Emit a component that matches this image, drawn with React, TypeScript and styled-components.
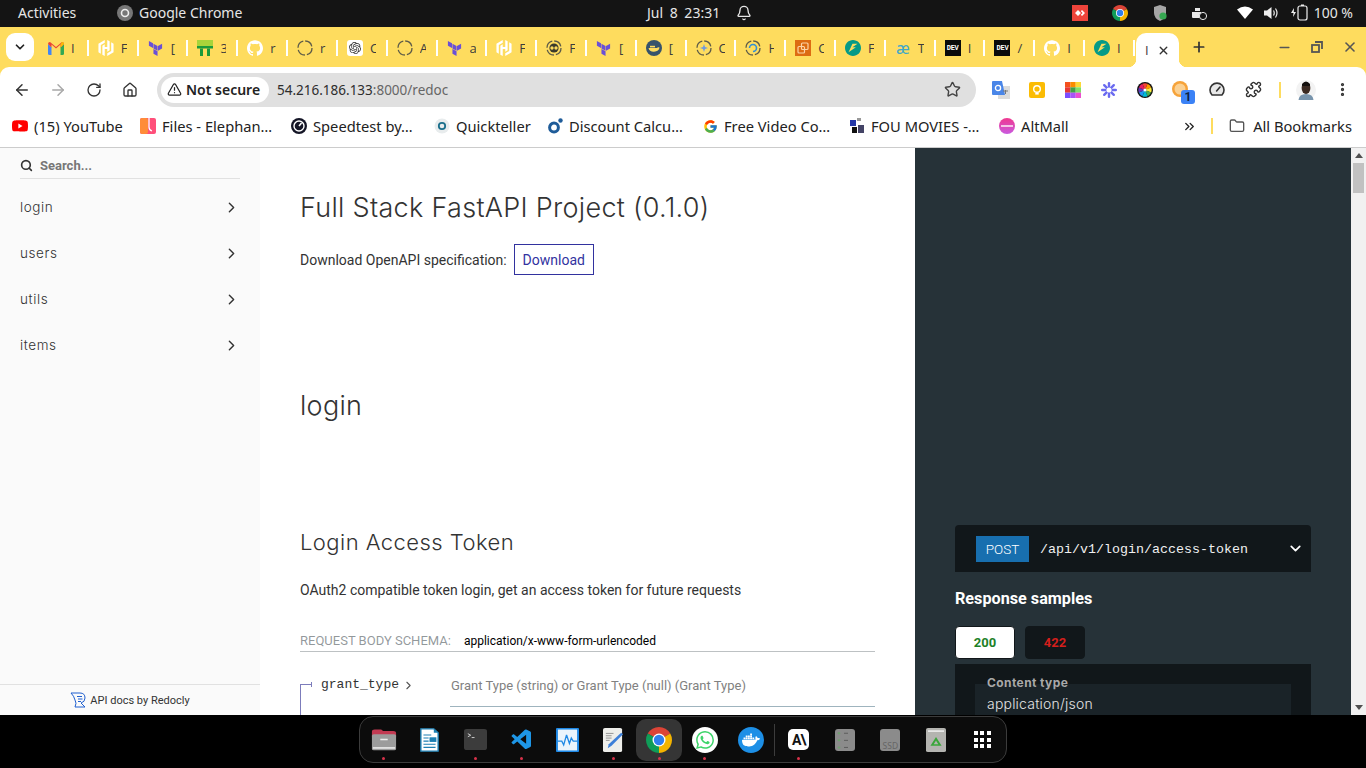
import React from "react"
import styled, { createGlobalStyle } from "styled-components"
import {
  ArrowLeft, ArrowRight, RotateCw, Home, Star, Puzzle, EllipsisVertical, TriangleAlert,
  ChevronDown, ChevronRight, ChevronsRight, Folder, Plus, X, Minus, Search, Bell,
} from "lucide-react"
import { SiHashicorp, SiTerraform, SiGithub, SiOpenai, SiDocker, SiFastapi, SiWhatsapp, SiYoutube } from "react-icons/si"
import { VscVscode } from "react-icons/vsc"
import { FcGoogle } from "react-icons/fc"

const GlobalStyle = createGlobalStyle`
  html, body { margin: 0; padding: 0; background: #000; }
  * { box-sizing: border-box; }
`

const CHROME_FONT = `"Noto Sans", "Open Sans", sans-serif`
const HEADING_FONT = `Inter, "Noto Sans", sans-serif`
const BODY_FONT = `Roboto, sans-serif`
const MONO_FONT = `"Liberation Mono", monospace`

const Screen = styled.div`
  width: 1366px;
  height: 768px;
  display: flex;
  flex-direction: column;
  overflow: hidden;
  background: #fedc5e;
`

/* gnome top bar */
const TopBar = styled.div`
  height: 27px;
  flex: none;
  display: flex;
  align-items: center;
  padding: 0 13px 2px 18px;
  background: #141414;
  color: #e6e6e6;
  font: 14px ${CHROME_FONT};
`
const AppMenu = styled.div`
  width: 629px;
  display: flex;
  align-items: center;
`
const AppName = styled.span`
  margin-left: 6px;
`
const ActivitiesLabel = styled.span`
  width: 99px;
`
const Clock = styled.div`
  display: flex;
  align-items: center;
  gap: 16px;
  word-spacing: 3px;
`
const Tray = styled.div`
  margin-left: auto;
  display: flex;
  align-items: center;
`
const TraySlot = styled.span<{ $w: number }>`
  width: ${p => p.$w}px;
  display: flex;
  justify-content: center;
  align-items: center;
`

/* tab strip */
const TabStrip = styled.div`
  height: 40px;
  flex: none;
  display: flex;
  align-items: center;
  padding-left: 6px;
  background: #fedc5e;
  color: #333;
`
const TabListButton = styled.div`
  width: 28px;
  height: 28px;
  margin-right: 6px;
  border-radius: 9px;
  background: #fff;
  display: flex;
  align-items: center;
  justify-content: center;
  color: #222;
`
const Tabs = styled.div`
  width: 1096px;
  display: flex;
`
const Tab = styled.div`
  flex: 1 1 0;
  display: flex;
  align-items: center;
  height: 34px;
  margin-top: 2px;
  padding-left: 8px;
`
const TabIcon = styled.span`
  width: 16px;
  height: 16px;
  flex: none;
  display: flex;
  align-items: center;
  justify-content: center;
`
const TabLetter = styled.span`
  width: 6px;
  margin-left: 7px;
  overflow: hidden;
  font: 13px "Open Sans", sans-serif;
  color: #3c3c3c;
`
const ActiveTabLetter = styled(TabLetter)`
  margin-left: 0;
`
const TabDivider = styled.span`
  width: 2px;
  height: 16px;
  margin-left: auto;
  margin-right: 1px;
  background: #fff;
`
const AeMark = styled.span`
  color: #3fa7c9;
  font: 16px ${CHROME_FONT};
`
const DevMark = styled.span`
  width: 16px;
  height: 16px;
  background: #0b0b0b;
  color: #fff;
  display: flex;
  align-items: center;
  justify-content: center;
  font: 700 7px ${MONO_FONT};
  letter-spacing: -0.3px;
`
const ActiveTab = styled.div`
  position: relative;
  width: 43px;
  height: 34px;
  margin-top: 6px;
  padding: 0 9px;
  display: flex;
  align-items: center;
  justify-content: space-between;
  background: #fff;
  border-radius: 10px 10px 0 0;
  &::before, &::after {
    content: "";
    position: absolute;
    bottom: 0;
    width: 8px;
    height: 8px;
  }
  &::before {
    left: -8px;
    background: radial-gradient(circle at 0 0, transparent 8px, #fff 8.5px);
  }
  &::after {
    right: -8px;
    background: radial-gradient(circle at 100% 0, transparent 8px, #fff 8.5px);
  }
`
const NewTab = styled.span`
  width: 40px;
  display: flex;
  justify-content: center;
`
const WindowControls = styled.div`
  margin-left: auto;
  display: flex;
  color: #555;
`
const WindowButton = styled.span`
  width: 32.5px;
  display: flex;
  justify-content: center;
  align-items: center;
`

/* address bar */
const Toolbar = styled.div`
  height: 45px;
  flex: none;
  display: flex;
  align-items: center;
  padding-left: 4px;
  background: #fff;
  border-radius: 9px 9px 0 0;
  color: #333;
`
const ToolbarSlot = styled.span<{ $faded?: boolean }>`
  width: 36px;
  flex: none;
  display: flex;
  justify-content: center;
  align-items: center;
  color: ${p => (p.$faded ? "#a8a8a8" : "#333")};
`
const Omnibox = styled.div`
  width: 819px;
  height: 34px;
  margin: 0 7px 0 9px;
  padding: 0 15px 0 4px;
  border-radius: 17px;
  background: #e0e0e0;
  display: flex;
  align-items: center;
`
const SecurityChip = styled.span`
  width: 108px;
  height: 26px;
  flex: none;
  border-radius: 13px;
  background: #fff;
  display: flex;
  align-items: center;
  gap: 4px;
  padding-left: 6px;
  font: 600 14px ${CHROME_FONT};
  color: #222;
  white-space: nowrap;
`
const UrlHost = styled.span`
  margin-left: 8px;
  font: 13.5px ${CHROME_FONT};
  color: #2e2e2e;
`
const UrlRest = styled.span`
  font: 13.5px ${CHROME_FONT};
  color: #666;
`
const StarSlot = styled.span`
  margin-left: auto;
  display: flex;
  color: #444;
`
const ToolbarDivider = styled.span`
  width: 2px;
  height: 16px;
  margin: 0 7px 0 8px;
  background: #fedc5e;
`
const Avatar = styled.span`
  width: 36px;
  display: flex;
  justify-content: center;
`

/* bookmarks */
const BookmarksBar = styled.div`
  height: 36px;
  flex: none;
  display: flex;
  align-items: center;
  gap: 17px;
  padding: 0 14px 7px 12px;
  background: #fff;
  border-bottom: 1px solid #ccc;
  font: 14.7px ${CHROME_FONT};
  color: #222;
`
const Bookmark = styled.div`
  display: flex;
  align-items: center;
  gap: 6px;
`
const BookmarkIcon = styled.span`
  width: 16px;
  height: 16px;
  display: flex;
  align-items: center;
  justify-content: center;
`
const BookmarkLabel = styled.span<{ $w: number }>`
  width: ${p => p.$w}px;
  white-space: nowrap;
`
const BookmarksEnd = styled.div`
  margin-left: auto;
  display: flex;
  align-items: center;
`
const BookmarksDivider = styled.span`
  width: 2px;
  height: 16px;
  margin: 0 16px 0 14px;
  background: #fedc5e;
`
const AllBookmarks = styled.span`
  margin-left: 8px;
`

/* redoc page */
const Page = styled.div`
  height: 567px;
  flex: none;
  display: flex;
  overflow: hidden;
  background: #fff;
`
const Sidebar = styled.aside`
  width: 260px;
  flex: none;
  display: flex;
  flex-direction: column;
  background: #fafafa;
`
const SearchRow = styled.div`
  height: 31px;
  margin: 0 20px;
  padding-top: 4px;
  display: flex;
  align-items: center;
  gap: 7px;
  border-bottom: 1px solid #e1e1e1;
  font: 700 13px ${BODY_FONT};
  color: #777;
`
const SideMenu = styled.nav`
  margin-top: 5px;
  flex: 1;
`
const SideItem = styled.div`
  height: 46px;
  padding: 0 20px;
  display: flex;
  align-items: center;
  justify-content: space-between;
  font: 300 13.5px ${HEADING_FONT};
  letter-spacing: 0.6px;
  color: #333;
`
const SideFooter = styled.div`
  height: 31px;
  border-top: 1px solid #e1e1e1;
  display: flex;
  align-items: center;
  justify-content: center;
  gap: 4px;
  font: 11px ${BODY_FONT};
  color: #333;
`
const Main = styled.main`
  width: 655px;
  flex: none;
  padding: 39px 40px 0;
`
const Title = styled.h1`
  margin: 0;
  font: 300 27px/42px ${HEADING_FONT};
  letter-spacing: 0.3px;
  color: #333;
`
const DownloadRow = styled.div`
  margin-top: 15px;
  display: flex;
  align-items: center;
  gap: 7px;
  font: 14px ${BODY_FONT};
  color: #333;
`
const DownloadButton = styled.a`
  width: 80px;
  height: 31px;
  border: 1px solid #32329f;
  display: flex;
  align-items: center;
  justify-content: center;
  color: #32329f;
`
const SectionTitle = styled(Title)`
  margin-top: 110px;
`
const OperationTitle = styled.h2`
  margin: 97px 0 0;
  font: 300 22px/36px ${HEADING_FONT};
  letter-spacing: 0.45px;
  color: #333;
`
const Description = styled.p`
  margin: 20px 0 0;
  font: 14px/20px ${BODY_FONT};
  color: #333;
`
const SchemaHeading = styled.h5`
  margin: 31px 0 0;
  height: 21px;
  border-bottom: 1px solid rgba(38, 50, 56, 0.3);
  font: 400 13px/20px ${BODY_FONT};
  color: rgba(38, 50, 56, 0.5);
  display: flex;
  gap: 13px;
`
const SchemaType = styled.span`
  color: #000;
  font-size: 12px;
`
const PropertyRow = styled.div`
  display: flex;
  height: 55px;
`
const PropertyName = styled.div`
  position: relative;
  width: 150px;
  padding: 24px 0 0 21px;
  font: 13px/18px ${MONO_FONT};
  color: #333;
  display: flex;
  align-items: flex-start;
  gap: 3px;
  svg {
    margin-top: 3px;
  }
  &::before {
    content: "";
    position: absolute;
    left: 0;
    top: 32px;
    bottom: -10px;
    width: 1px;
    background: #7c7cbb;
  }
  &::after {
    content: "";
    position: absolute;
    left: 0;
    top: 32px;
    width: 11px;
    height: 5px;
    margin-top: -2px;
    border-right: 1px solid #7c7cbb;
    background: linear-gradient(#7c7cbb, #7c7cbb) 0 2px / 100% 1px no-repeat;
  }
`
const PropertyDetail = styled.div`
  flex: 1;
  padding: 25px 0 0 1px;
  border-bottom: 1px solid #9fb4be;
  font: 13px/18px ${BODY_FONT};
  color: #818181;
`
const RightPanel = styled.section`
  width: 436px;
  flex: none;
  padding: 377px 40px 0;
  background: #263238;
  color: #fff;
`
const EndpointBar = styled.div`
  height: 47px;
  padding: 0 7px 0 21px;
  border-radius: 4px 4px 0 0;
  background: #11171a;
  display: flex;
  align-items: center;
`
const MethodBadge = styled.span`
  width: 53px;
  height: 26px;
  background: #186faf;
  display: flex;
  align-items: center;
  justify-content: center;
  font: 300 13.5px ${BODY_FONT};
`
const EndpointPath = styled.span`
  margin-left: 11px;
  padding-top: 1px;
  flex: 1;
  font: 13.33px ${MONO_FONT};
  color: #f0f0f0;
`
const SamplesTitle = styled.h3`
  margin: 16px 0 0;
  font: 700 16.2px/22px ${BODY_FONT};
`
const StatusTabs = styled.div`
  margin-top: 16px;
  display: flex;
  gap: 10px;
`
const StatusTab = styled.span<{ $active?: boolean }>`
  width: 60px;
  height: 33px;
  border-radius: 4px;
  border: 1px solid #11171a;
  display: flex;
  align-items: center;
  justify-content: center;
  font: 700 13px ${BODY_FONT};
  background: ${p => (p.$active ? "#fff" : "#11171a")};
  color: ${p => (p.$active ? "#1d8127" : "#d41f1c")};
`
const SamplePanel = styled.div`
  margin-top: 5px;
  height: 120px;
  padding: 20px;
  background: #11171a;
`
const ContentTypeBox = styled.div`
  display: flow-root;
  height: 80px;
  padding: 0 12px;
  background: #1a2328;
`
const ContentTypeLabel = styled.div`
  margin-top: -9px;
  font: 700 12px/16px ${HEADING_FONT};
  letter-spacing: 0.4px;
  color: #a9a9a9;
`
const ContentTypeValue = styled.div`
  margin-top: 4px;
  font: 300 14px/18px ${HEADING_FONT};
  letter-spacing: 0.2px;
  color: #e4e4e4;
`
const Scrollbar = styled.div`
  width: 15px;
  flex: none;
  background: #f1f1f1;
  display: flex;
  flex-direction: column;
  align-items: center;
  padding-top: 5px;
`
const ScrollUp = styled.span`
  border-left: 4px solid transparent;
  border-right: 4px solid transparent;
  border-bottom: 5px solid #505050;
`
const ScrollThumb = styled.span`
  width: 11px;
  height: 30px;
  margin-top: 5px;
  background: #c1c1c1;
`
const ScrollDown = styled.span`
  margin-top: auto;
  margin-bottom: 5px;
  border-left: 4px solid transparent;
  border-right: 4px solid transparent;
  border-top: 5px solid #505050;
`

/* dock */
const DockArea = styled.div`
  flex: 1;
  display: flex;
  justify-content: center;
  padding-top: 1px;
  background: #000;
`
const Dock = styled.div`
  width: 648px;
  height: 47px;
  padding: 0 1px;
  display: flex;
  align-items: center;
  border: 1px solid #3c3c3c;
  border-radius: 14px;
  background: #0c0c0c;
`
const DockItem = styled.div<{ $active?: boolean; $running?: boolean }>`
  position: relative;
  width: 46px;
  height: 42px;
  display: flex;
  align-items: center;
  justify-content: center;
  border-radius: 10px;
  background: ${p => (p.$active ? "#353535" : "transparent")};
  &::after {
    content: "";
    display: ${p => (p.$running ? "block" : "none")};
    position: absolute;
    left: 50%;
    bottom: 1px;
    width: 3px;
    height: 3px;
    margin-left: -1.5px;
    border-radius: 50%;
    background: #d8324a;
  }
`
const DockDivider = styled.span`
  width: 1px;
  height: 32px;
  margin: 0 1px 0 0;
  background: #3c3c3c;
`
const WhiteDisc = styled.span<{ $bg?: string }>`
  width: 26px;
  height: 26px;
  border-radius: 50%;
  background: ${p => p.$bg || "#fff"};
  display: flex;
  align-items: center;
  justify-content: center;
`
const AnthropicTile = styled.span`
  width: 21px;
  height: 21px;
  border-radius: 5px;
  background: #fff;
  color: #111;
  display: flex;
  align-items: center;
  justify-content: center;
  font: 700 14px ${BODY_FONT};
  letter-spacing: -1px;
`
const DriveTile = styled.span`
  width: 20px;
  height: 22px;
  border-radius: 3px;
  background: #8b8b8b;
  display: flex;
  align-items: flex-end;
  justify-content: center;
  font: 8.5px ${CHROME_FONT};
  color: #666;
`
const DotGrid = styled.span`
  display: grid;
  grid-template-columns: repeat(3, 4px);
  gap: 2.5px;
  span {
    width: 4px;
    height: 4px;
    background: #fff;
  }
`

/* drawn icons */
function ChromeLogo({ size }: { size: number }) {
  return (
    <svg width={size} height={size} viewBox="4 4 40 40">
      <path d="M24 24 L6.68 14 A20 20 0 0 1 41.32 14 Z" fill="#db4437" />
      <path d="M24 24 L41.32 14 A20 20 0 0 1 24 44 Z" fill="#f4b400" />
      <path d="M24 24 L24 44 A20 20 0 0 1 6.68 14 Z" fill="#0f9d58" />
      <circle cx="24" cy="24" r="10" fill="#fff" />
      <circle cx="24" cy="24" r="8" fill="#2f7fed" />
    </svg>
  )
}

function GmailLogo() {
  return (
    <svg width="16" height="13" viewBox="0 0 16 13">
      <path d="M0 2 V11.5 Q0 13 1.5 13 H3.5 V5.5 Z" fill="#4285f4" />
      <path d="M16 2 V11.5 Q16 13 14.5 13 H12.5 V5.5 Z" fill="#34a853" />
      <path d="M0 2 Q0 0 2 0 L8 5 L14 0 Q16 0 16 2 L12.5 5.5 V2.5 L8 6.5 L3.5 2.5 V5.5 Z" fill="#ea4335" />
      <path d="M12.5 2.5 L14 0 Q16 0 16 2 L12.5 5.5 Z" fill="#fbbc04" />
    </svg>
  )
}

function ThreeMLogo() {
  return (
    <svg width="16" height="16" viewBox="0 0 16 16">
      <rect x="0" y="0" width="16" height="6" fill="#a8d43a" />
      <rect x="0" y="6" width="16" height="2.5" fill="#1a9a3a" />
      <rect x="3" y="8.5" width="3" height="7.5" fill="#1a9a3a" />
      <rect x="10" y="8.5" width="3" height="7.5" fill="#1a9a3a" />
    </svg>
  )
}

function DashedRing({ inner, center }: { inner?: "eyes" | "star" | "swirl"; center?: string }) {
  return (
    <svg width="16" height="16" viewBox="0 0 16 16">
      <circle cx="8" cy="8" r="7" fill="none" stroke="#5c5a48" strokeWidth="1.3" strokeDasharray="9 2" />
      {inner === "eyes" && (
        <>
          <circle cx="8" cy="8" r="4.6" fill="#3a3a2c" />
          <circle cx="6" cy="8" r="1.7" fill="#fedc5e" />
          <circle cx="10" cy="8" r="1.7" fill="#fedc5e" />
        </>
      )}
      {inner === "star" && <path d="M8 4 L9 7 L12 8 L9 9 L8 12 L7 9 L4 8 L7 7 Z" fill={center} />}
      {inner === "swirl" && <path d="M4.5 8 A3.5 3.5 0 1 1 8 11.5" fill="none" stroke={center} strokeWidth="1.6" />}
    </svg>
  )
}

const OpenAiSquare = styled.span`
  width: 16px;
  height: 16px;
  border-radius: 3px;
  background: #fff;
  display: flex;
  align-items: center;
  justify-content: center;
`

function DockerDisc() {
  return (
    <svg width="16" height="16" viewBox="0 0 16 16">
      <circle cx="8" cy="8" r="8" fill="#37536b" />
      <path d="M2.5 8 H11 Q12 6.8 13.5 7.6 Q13 11.5 8 11.8 Q3.5 12 2.5 8 Z" fill="#fedc5e" />
      <rect x="4" y="5.8" width="5" height="1.6" fill="#fedc5e" />
    </svg>
  )
}

function StackTile() {
  return (
    <svg width="16" height="16" viewBox="0 0 16 16">
      <rect width="16" height="16" fill="#dd6b12" />
      <rect x="3" y="6.5" width="6.5" height="6.5" rx="1" fill="none" stroke="#fbd3a6" strokeWidth="1.2" />
      <rect x="6.5" y="3" width="6.5" height="6.5" rx="1" fill="none" stroke="#fbd3a6" strokeWidth="1.2" />
    </svg>
  )
}

function FastApiDisc() {
  return <SiFastapi size={16} color="#059a87" />
}

function FilesLogo() {
  return (
    <svg width="16" height="16" viewBox="0 0 16 16">
      <rect width="16" height="16" rx="2" fill="#ff4f7a" />
      <rect x="0" y="0" width="8" height="16" rx="2" fill="#ff8c39" />
      <path d="M9 0 V9 Q9 12 12 13" fill="none" stroke="#fff" strokeWidth="1.3" />
    </svg>
  )
}

function SpeedtestLogo() {
  return (
    <svg width="16" height="16" viewBox="0 0 16 16">
      <circle cx="8" cy="8" r="8" fill="#141526" />
      <circle cx="8" cy="8" r="5" fill="none" stroke="#fff" strokeWidth="1.4" />
      <path d="M8 8 L10.5 5" stroke="#fff" strokeWidth="1.5" />
    </svg>
  )
}

function QuicktellerLogo() {
  return (
    <svg width="16" height="16" viewBox="0 0 16 16">
      <circle cx="8" cy="8" r="7.5" fill="#e8eced" />
      <circle cx="8" cy="8" r="3.2" fill="none" stroke="#1b6f8c" strokeWidth="1.8" />
    </svg>
  )
}

function DiscountLogo() {
  return (
    <svg width="16" height="16" viewBox="0 0 16 16">
      <circle cx="7" cy="9.5" r="4.4" fill="none" stroke="#1f5c99" strokeWidth="3" />
      <circle cx="13.5" cy="2.5" r="2.2" fill="#1f5c99" />
    </svg>
  )
}

function MoviesLogo() {
  return (
    <svg width="16" height="16" viewBox="0 0 16 16">
      <rect x="1" y="2" width="6" height="6" fill="#2438a8" />
      <rect x="8" y="0" width="4" height="3" fill="#999" />
      <rect x="3" y="9" width="5" height="6" fill="#111" />
      <rect x="9" y="7" width="6" height="8" fill="#446" />
    </svg>
  )
}

function AltMallLogo() {
  return (
    <svg width="16" height="16" viewBox="0 0 16 16">
      <defs>
        <linearGradient id="altmall" x1="0" y1="0" x2="0" y2="1">
          <stop offset="0" stopColor="#f0388f" />
          <stop offset="1" stopColor="#c95be0" />
        </linearGradient>
      </defs>
      <circle cx="8" cy="8" r="8" fill="url(#altmall)" />
      <rect x="2" y="7" width="12" height="2" fill="#f6c6e6" />
    </svg>
  )
}

function TranslateExt() {
  return (
    <svg width="18" height="18" viewBox="0 0 18 18">
      <rect x="6" y="5" width="12" height="13" fill="#dcdcdc" />
      <path d="M0 1 Q0 0 1 0 H10 L13 14 H1 Q0 14 0 13 Z" fill="#4a86e8" />
      <circle cx="6" cy="7" r="2.6" fill="none" stroke="#fff" strokeWidth="1.3" />
      <path d="M11 10 H16 M13.5 9 V13" stroke="#777" strokeWidth="1" />
    </svg>
  )
}

function KeepExt() {
  return (
    <svg width="16" height="16" viewBox="0 0 16 16">
      <rect width="16" height="16" rx="2" fill="#fbbc04" />
      <circle cx="8" cy="7" r="3.3" fill="none" stroke="#fff" strokeWidth="1.4" />
      <rect x="6.3" y="11" width="3.4" height="1.6" fill="#fff" />
    </svg>
  )
}

function PaletteExt() {
  const rows = [
    ["#f4511e", "#fb8c00", "#fdd835"],
    ["#e53935", "#43a047", "#7ee06a"],
    ["#7c4dff", "#a855f7", "#ec4fd0"],
  ]
  return (
    <svg width="16" height="16" viewBox="0 0 16 16">
      {rows.map((row, y) =>
        row.map((fill, x) => <rect key={`${x}-${y}`} x={x * 5.34} y={y * 5.34} width="5.4" height="5.4" fill={fill} />)
      )}
    </svg>
  )
}

function SunburstExt() {
  const spokes = [0, 45, 90, 135]
  return (
    <svg width="16" height="16" viewBox="0 0 16 16">
      {spokes.map(a => (
        <rect key={a} x="6.8" y="0" width="2.4" height="16" rx="1.2" fill="#6a6af0" transform={`rotate(${a} 8 8)`} />
      ))}
      <circle cx="8" cy="8" r="2.6" fill="#fff" />
    </svg>
  )
}

function WheelExt() {
  const colors = ["#f44336", "#ff9800", "#ffeb3b", "#4caf50", "#00bcd4", "#2196f3", "#673ab7", "#e91e63"]
  return (
    <svg width="16" height="16" viewBox="0 0 16 16">
      <circle cx="8" cy="8" r="8" fill="#111" />
      {colors.map((c, i) => (
        <path key={c} d="M8 8 L5.5 1.8 A6.7 6.7 0 0 1 10.5 1.8 Z" fill={c} transform={`rotate(${i * 45} 8 8)`} />
      ))}
      <circle cx="8" cy="8" r="1.6" fill="#fff" />
    </svg>
  )
}

function SpeedExt() {
  return (
    <svg width="16" height="16" viewBox="0 0 16 16">
      <path d="M3 13 A7 7 0 1 1 13 13 Z" fill="#e8e8e8" stroke="#333" strokeWidth="1.6" strokeLinejoin="round" />
      <path d="M7.6 9 L11 5" stroke="#333" strokeWidth="1.6" strokeLinecap="round" />
    </svg>
  )
}

const BadgeWrap = styled.span`
  position: relative;
  display: flex;
  margin: -2px 2px 0 0;
`
const CountBadge = styled.span`
  position: absolute;
  right: -7px;
  bottom: -7px;
  width: 14px;
  height: 14px;
  border-radius: 3px;
  background: #3b82f6;
  color: #10223f;
  display: flex;
  align-items: center;
  justify-content: center;
  font: 700 12px ${BODY_FONT};
`

function OrangeExt() {
  return (
    <BadgeWrap>
      <svg width="16" height="16" viewBox="0 0 16 16">
        <circle cx="8" cy="8" r="8" fill="#f6a33a" />
        <circle cx="8" cy="8" r="5.5" fill="#fbd193" />
      </svg>
      <CountBadge>1</CountBadge>
    </BadgeWrap>
  )
}

function ProfilePhoto() {
  return (
    <svg width="20" height="20" viewBox="0 0 20 20">
      <circle cx="10" cy="10" r="10" fill="#f3f3f3" />
      <path d="M2.5 20 Q3 14 10 14 Q17 14 17.5 20 Z" fill="#7894ac" />
      <ellipse cx="10" cy="8" rx="4.4" ry="6" fill="#3b2a22" />
      <path d="M6 4 Q10 -1 14 4 L14 6 H6 Z" fill="#14100e" />
    </svg>
  )
}

function RedoclyLogo() {
  return (
    <svg width="16" height="16" viewBox="0 0 16 16" fill="none" stroke="#1f5fd0" strokeWidth="1">
      <path d="M1 1 H10 Q15 1 15 6 Q15 10 11 11 L15 15 H5 Q7 11 5 8 Q4 4 1 1 Z" />
      <path d="M7 4.5 H12 M8 7 H12.5 M8 9.5 H11" />
    </svg>
  )
}

function FilesDock() {
  return (
    <svg width="26" height="23" viewBox="0 0 28 30" preserveAspectRatio="none">
      <path d="M1 5 Q1 2 4 2 H11 L13 4 H24 Q27 4 27 7 V12 H1 Z" fill="#c23a52" />
      <rect x="1" y="8" width="26" height="21" rx="2" fill="#9c9c9c" />
      <rect x="10" y="14" width="8" height="2" fill="#eee" />
      <rect x="2" y="25" width="24" height="2" fill="#eee" />
    </svg>
  )
}

function WriterDock() {
  return (
    <svg width="19" height="24" viewBox="0 0 22 31" preserveAspectRatio="none">
      <path d="M1 1 H16 L21 6 V30 H1 Z" fill="#fff" stroke="#1d7fb3" strokeWidth="1.6" />
      <path d="M16 1 L21 6 H16 Z" fill="#1d7fb3" />
      <path d="M4 9 H13 M4 13 H10 M4 17 H10 M4 21 H18 M4 25 H18" stroke="#1d7fb3" strokeWidth="1.4" />
      <rect x="11" y="12" width="8" height="6" fill="#1d7fb3" />
    </svg>
  )
}

function TerminalDock() {
  return (
    <svg width="23" height="21" viewBox="0 0 24 27" preserveAspectRatio="none">
      <rect width="24" height="27" rx="3" fill="#3c3c3c" />
      <path d="M4 6 L7 8 L4 10" fill="none" stroke="#ddd" strokeWidth="1" />
      <path d="M8 11 H11" stroke="#ddd" strokeWidth="1" />
    </svg>
  )
}

function MonitorDock() {
  return (
    <svg width="23" height="24" viewBox="0 0 24 31" preserveAspectRatio="none">
      <rect width="24" height="31" rx="1" fill="#1e88e5" />
      <rect x="2" y="2" width="20" height="27" fill="#eaf4fc" />
      <path d="M2 17 H6 L8 22 L11 9 L14 20 L16 13 L18 17 H22" fill="none" stroke="#1e88e5" strokeWidth="1.4" />
    </svg>
  )
}

function EditorDock() {
  return (
    <svg width="21" height="24" viewBox="0 0 22 31" preserveAspectRatio="none">
      <rect width="20" height="31" rx="2" fill="#eeeeea" />
      <path d="M3 7 H11 M3 10 H9 M3 13 H9 M3 16 H7" stroke="#888" strokeWidth="1" />
      <path d="M19 6 L21 8 L9 23 L5 26 L6 21 Z" fill="#3d7fd8" />
    </svg>
  )
}

function DriveDock() {
  return (
    <DriveTile>
      <svg width="20" height="22" viewBox="0 0 20 31" preserveAspectRatio="none">
        <circle cx="4" cy="6" r="1.4" fill="#6ea26e" />
        <circle cx="4" cy="16" r="1.4" fill="#6ea26e" />
        <circle cx="4" cy="26" r="1.4" fill="#6ea26e" />
        <path d="M9 6 H13 M9 16 H13 M9 26 H13" stroke="#555" />
      </svg>
    </DriveTile>
  )
}

function TrashDock() {
  return (
    <svg width="20" height="24" viewBox="0 0 20 31" preserveAspectRatio="none">
      <rect width="20" height="31" rx="2" fill="#b4b4b0" />
      <rect x="2" y="3" width="16" height="2" fill="#eee" />
      <path d="M6 22 L10 14 L14 22 Z" fill="none" stroke="#3aa63a" strokeWidth="2" />
    </svg>
  )
}

const TERRAFORM_PURPLE = "#6b50d6"

const openTabs: { icon: React.ReactNode; letter: string }[] = [
  { icon: <GmailLogo />, letter: "I" },
  { icon: <SiHashicorp size={16} color="#fff" />, letter: "F" },
  { icon: <SiTerraform size={15} color={TERRAFORM_PURPLE} />, letter: "[" },
  { icon: <ThreeMLogo />, letter: "3" },
  { icon: <SiGithub size={16} color="#fff" />, letter: "r" },
  { icon: <DashedRing />, letter: "r" },
  { icon: <OpenAiSquare><SiOpenai size={12} color="#333" /></OpenAiSquare>, letter: "C" },
  { icon: <DashedRing />, letter: "A" },
  { icon: <SiTerraform size={15} color={TERRAFORM_PURPLE} />, letter: "a" },
  { icon: <SiHashicorp size={16} color="#fff" />, letter: "F" },
  { icon: <DashedRing inner="eyes" />, letter: "F" },
  { icon: <SiTerraform size={15} color={TERRAFORM_PURPLE} />, letter: "[" },
  { icon: <DockerDisc />, letter: "[" },
  { icon: <DashedRing inner="star" center="#6f9ae0" />, letter: "C" },
  { icon: <DashedRing inner="swirl" center="#2f8fd8" />, letter: "H" },
  { icon: <StackTile />, letter: "C" },
  { icon: <FastApiDisc />, letter: "F" },
  { icon: <AeMark>æ</AeMark>, letter: "T" },
  { icon: <DevMark>DEV</DevMark>, letter: "I" },
  { icon: <DevMark>DEV</DevMark>, letter: "/" },
  { icon: <SiGithub size={16} color="#fff" />, letter: "I" },
  { icon: <FastApiDisc />, letter: "I" },
]

const bookmarks: { icon: React.ReactNode; label: string; width: number }[] = [
  { icon: <SiYoutube size={16} color="#f00" />, label: "(15) YouTube", width: 89 },
  { icon: <FilesLogo />, label: "Files - Elephan…", width: 112 },
  { icon: <SpeedtestLogo />, label: "Speedtest by…", width: 104 },
  { icon: <QuicktellerLogo />, label: "Quickteller", width: 74 },
  { icon: <DiscountLogo />, label: "Discount Calcu…", width: 116 },
  { icon: <FcGoogle size={15} />, label: "Free Video Co…", width: 108 },
  { icon: <MoviesLogo />, label: "FOU MOVIES -…", width: 111 },
  { icon: <AltMallLogo />, label: "AltMall", width: 49 },
]

const tagGroups = ["login", "users", "utils", "items"]

export default function App() {
  return (
    <Screen>
      <GlobalStyle />
      <TopBar>
        <AppMenu>
          <ActivitiesLabel>Activities</ActivitiesLabel>
          <svg width="16" height="16" viewBox="0 0 16 16">
            <circle cx="8" cy="8" r="8" fill="#777" />
            <circle cx="8" cy="8" r="3.5" fill="none" stroke="#eee" strokeWidth="1.6" />
          </svg>
          <AppName>Google Chrome</AppName>
        </AppMenu>
        <Clock>
          <span>Jul 8 23:31</span>
          <Bell size={16} />
        </Clock>
        <Tray>
          <TraySlot $w={16}>
            <svg width="16" height="16" viewBox="0 0 16 16">
              <rect width="16" height="16" fill="#ef443b" />
              <path d="M6 5 L9 8 L6 11 L3 8 Z M10 5 L13 8 L10 11 L8.8 9.8 L10.6 8 L8.8 6.2 Z" fill="#fff" />
            </svg>
          </TraySlot>
          <TraySlot $w={64}>
            <ChromeLogo size={16} />
          </TraySlot>
          <TraySlot $w={16}>
            <svg width="14" height="16" viewBox="0 0 14 16">
              <path d="M1 2 L7 0 L13 2 V8 Q13 13 7 16 Q1 13 1 8 Z" fill="#a5a5a5" />
              <circle cx="10" cy="11" r="3.6" fill="#37a852" />
            </svg>
          </TraySlot>
          <TraySlot $w={64}>
            <svg width="17" height="16" viewBox="0 0 17 16">
              <path d="M1 7 H10 V13 H2 Q1 13 1 12 Z M4 3 H9 V6 H4 Z" fill="#e8e8e8" />
              <circle cx="12" cy="11" r="3.6" fill="#141414" stroke="#e8e8e8" />
            </svg>
          </TraySlot>
          <TraySlot $w={26}>
            <svg width="16" height="13" viewBox="0 0 16 13">
              <path d="M0 3.5 Q8 -2.5 16 3.5 L8 13 Z" fill="#fff" />
            </svg>
          </TraySlot>
          <TraySlot $w={28}>
            <svg width="15" height="14" viewBox="0 0 15 14" fill="none" stroke="#eee" strokeWidth="1.2">
              <path d="M0 4.5 H3 L7.5 1 V13 L3 9.5 H0 Z" fill="#eee" stroke="none" />
              <path d="M9.5 4.5 Q11 7 9.5 9.5 M11.5 2.5 Q14.5 7 11.5 11.5" />
            </svg>
          </TraySlot>
          <TraySlot $w={28}>
            <svg width="18" height="17" viewBox="0 0 18 17">
              <path d="M3 4 L0 9 H2.5 L2 13 L5 8 H2.8 Z" fill="#eee" />
              <rect x="7" y="2" width="9" height="14" rx="2" fill="none" stroke="#eee" strokeWidth="1.2" />
              <rect x="10" y="0.5" width="3" height="1.5" fill="#eee" />
            </svg>
          </TraySlot>
          <span>100 %</span>
        </Tray>
      </TopBar>

      <TabStrip>
        <TabListButton>
          <ChevronDown size={14} strokeWidth={3} />
        </TabListButton>
        <Tabs>
          {openTabs.map((tab, i) => (
            <Tab key={i}>
              <TabIcon>{tab.icon}</TabIcon>
              <TabLetter>{tab.letter}</TabLetter>
              <TabDivider />
            </Tab>
          ))}
        </Tabs>
        <ActiveTab>
          <ActiveTabLetter>I</ActiveTabLetter>
          <X size={13} strokeWidth={2.6} color="#333" />
        </ActiveTab>
        <NewTab>
          <Plus size={16} strokeWidth={2.6} color="#333" />
        </NewTab>
        <WindowControls>
          <WindowButton>
            <Minus size={15} strokeWidth={2.2} />
          </WindowButton>
          <WindowButton>
            <svg width="12" height="12" viewBox="0 0 12 12" fill="none" stroke="#555" strokeWidth="1.8">
              <rect x="1" y="4" width="7" height="7" />
              <path d="M4 1 H11 V8" />
            </svg>
          </WindowButton>
          <WindowButton>
            <X size={16} strokeWidth={2.4} />
          </WindowButton>
        </WindowControls>
      </TabStrip>

      <Toolbar>
        <ToolbarSlot><ArrowLeft size={18} strokeWidth={2} /></ToolbarSlot>
        <ToolbarSlot $faded><ArrowRight size={18} strokeWidth={2} /></ToolbarSlot>
        <ToolbarSlot><RotateCw size={16} strokeWidth={2} /></ToolbarSlot>
        <ToolbarSlot><Home size={16} strokeWidth={2} /></ToolbarSlot>
        <Omnibox>
          <SecurityChip>
            <TriangleAlert size={15} strokeWidth={2} />
            Not secure
          </SecurityChip>
          <UrlHost>54.216.186.133</UrlHost>
          <UrlRest>:8000/redoc</UrlRest>
          <StarSlot><Star size={17} strokeWidth={2} /></StarSlot>
        </Omnibox>
        <ToolbarSlot><TranslateExt /></ToolbarSlot>
        <ToolbarSlot><KeepExt /></ToolbarSlot>
        <ToolbarSlot><PaletteExt /></ToolbarSlot>
        <ToolbarSlot><SunburstExt /></ToolbarSlot>
        <ToolbarSlot><WheelExt /></ToolbarSlot>
        <ToolbarSlot><OrangeExt /></ToolbarSlot>
        <ToolbarSlot><SpeedExt /></ToolbarSlot>
        <ToolbarSlot><Puzzle size={17} strokeWidth={2} /></ToolbarSlot>
        <ToolbarDivider />
        <Avatar><ProfilePhoto /></Avatar>
        <ToolbarSlot><EllipsisVertical size={17} strokeWidth={2.6} /></ToolbarSlot>
      </Toolbar>

      <BookmarksBar>
        {bookmarks.map(b => (
          <Bookmark key={b.label}>
            <BookmarkIcon>{b.icon}</BookmarkIcon>
            <BookmarkLabel $w={b.width}>{b.label}</BookmarkLabel>
          </Bookmark>
        ))}
        <BookmarksEnd>
          <ChevronsRight size={15} strokeWidth={2.2} />
          <BookmarksDivider />
          <Folder size={16} color="#555" />
          <AllBookmarks>All Bookmarks</AllBookmarks>
        </BookmarksEnd>
      </BookmarksBar>

      <Page>
        <Sidebar>
          <SearchRow>
            <Search size={13} strokeWidth={3} color="#333" />
            Search...
          </SearchRow>
          <SideMenu>
            {tagGroups.map(tag => (
              <SideItem key={tag}>
                {tag}
                <ChevronRight size={17} strokeWidth={2} color="#333" />
              </SideItem>
            ))}
          </SideMenu>
          <SideFooter>
            <RedoclyLogo />
            API docs by Redocly
          </SideFooter>
        </Sidebar>

        <Main>
          <Title>Full Stack FastAPI Project (0.1.0)</Title>
          <DownloadRow>
            Download OpenAPI specification:
            <DownloadButton>Download</DownloadButton>
          </DownloadRow>
          <SectionTitle>login</SectionTitle>
          <OperationTitle>Login Access Token</OperationTitle>
          <Description>OAuth2 compatible token login, get an access token for future requests</Description>
          <SchemaHeading>
            REQUEST BODY SCHEMA:
            <SchemaType>application/x-www-form-urlencoded</SchemaType>
          </SchemaHeading>
          <PropertyRow>
            <PropertyName>
              grant_type
              <ChevronRight size={13} color="#555" />
            </PropertyName>
            <PropertyDetail>Grant Type (string) or Grant Type (null) (Grant Type)</PropertyDetail>
          </PropertyRow>
        </Main>

        <RightPanel>
          <EndpointBar>
            <MethodBadge>POST</MethodBadge>
            <EndpointPath>/api/v1/login/access-token</EndpointPath>
            <ChevronDown size={17} strokeWidth={2.4} />
          </EndpointBar>
          <SamplesTitle>Response samples</SamplesTitle>
          <StatusTabs>
            <StatusTab $active>200</StatusTab>
            <StatusTab>422</StatusTab>
          </StatusTabs>
          <SamplePanel>
            <ContentTypeBox>
              <ContentTypeLabel>Content type</ContentTypeLabel>
              <ContentTypeValue>application/json</ContentTypeValue>
            </ContentTypeBox>
          </SamplePanel>
        </RightPanel>

        <Scrollbar>
          <ScrollUp />
          <ScrollThumb />
          <ScrollDown />
        </Scrollbar>
      </Page>

      <DockArea>
        <Dock>
          <DockItem $running><FilesDock /></DockItem>
          <DockItem><WriterDock /></DockItem>
          <DockItem $running><TerminalDock /></DockItem>
          <DockItem $running><VscVscode size={24} color="#1e96e6" /></DockItem>
          <DockItem><MonitorDock /></DockItem>
          <DockItem $running><EditorDock /></DockItem>
          <DockItem $active $running><ChromeLogo size={26} /></DockItem>
          <DockItem $running><WhiteDisc><SiWhatsapp size={18} color="#3ed46a" /></WhiteDisc></DockItem>
          <DockItem><WhiteDisc $bg="#1d8fe6"><SiDocker size={18} color="#fff" /></WhiteDisc></DockItem>
          <DockDivider />
          <DockItem $running><AnthropicTile>A\</AnthropicTile></DockItem>
          <DockItem><DriveDock /></DockItem>
          <DockItem><DriveTile>SSD</DriveTile></DockItem>
          <DockItem><TrashDock /></DockItem>
          <DockItem>
            <DotGrid>
              {Array.from({ length: 9 }).map((_, i) => <span key={i} />)}
            </DotGrid>
          </DockItem>
        </Dock>
      </DockArea>
    </Screen>
  )
}
